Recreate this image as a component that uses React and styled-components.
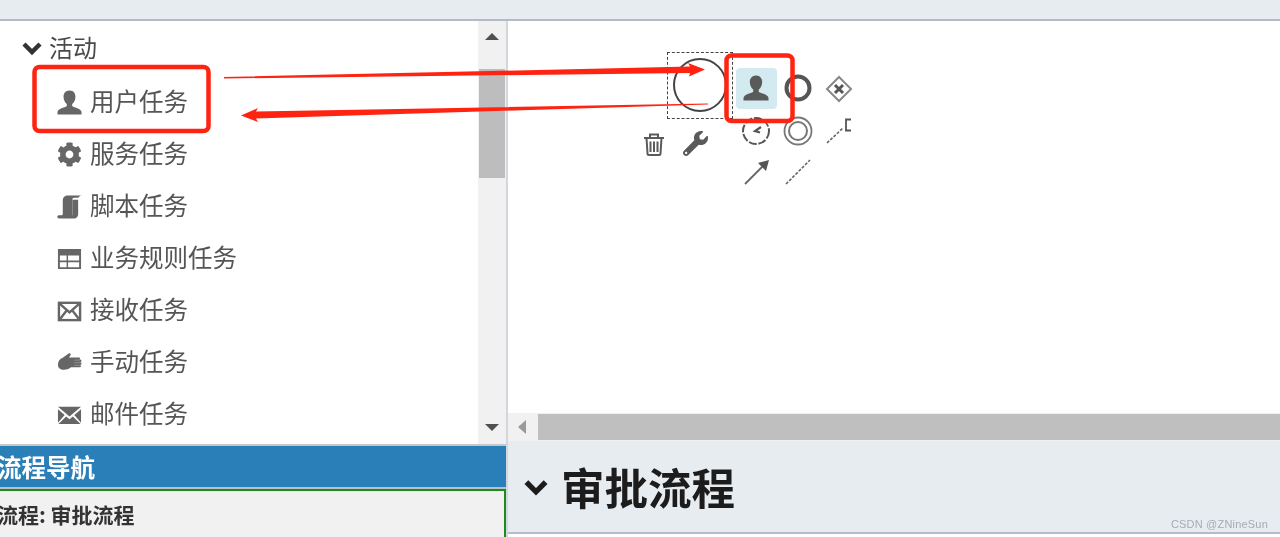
import React from 'react';
import styled, { createGlobalStyle } from 'styled-components';
import { FaCog, FaWrench } from 'react-icons/fa';

const GlobalStyle = createGlobalStyle`
    html, body {
        margin: 0;
        padding: 0;
        overflow: hidden;
    }
    body {
        font-family: "Noto Sans CJK SC", "Liberation Sans", sans-serif;
    }
`;

const Page = styled.div`
    position: relative;
    width: 1280px;
    height: 537px;
    overflow: hidden;
    background: #fff;
    display: flex;
    flex-direction: column;
    filter: blur(0.35px);
`;

const TopBar = styled.div`
    height: 19px;
    flex: none;
    background: #e7ecf1;
    border-bottom: 2px solid #b4bac8;
`;

const Main = styled.div`
    flex: 1;
    min-height: 0;
    display: flex;
`;

const LeftColumn = styled.div`
    width: 506px;
    flex: none;
    display: flex;
    flex-direction: column;
    border-right: 2px solid #d3d6dc;
`;

const Palette = styled.div`
    height: 423px;
    flex: none;
    display: flex;
    border-bottom: 2px solid #c6c8ca;
`;

const PaletteList = styled.div`
    flex: 1;
`;

const GroupTitle = styled.div`
    box-sizing: border-box;
    height: 53px;
    padding: 0 0 2px 22px;
    display: flex;
    align-items: center;
    gap: 7px;
    font-size: 24px;
    color: #4a4a4a;
    svg {
        width: 20px;
        height: 20px;
        color: #333;
        transform: translateY(1px);
    }
`;

const PaletteRow = styled.div`
    height: 52px;
    padding-left: 57px;
    display: flex;
    align-items: center;
    gap: 8px;
    font-size: 24.5px;
    color: #555;
`;

const RowIcon = styled.span`
    width: 25px;
    height: 25px;
    flex: none;
    color: #666;
    display: flex;
    align-items: center;
    justify-content: center;
    transform: translateY(2px);
    svg {
        width: 100%;
        height: 100%;
        display: block;
    }
`;

const VScroll = styled.div`
    width: 28px;
    flex: none;
    background: #f1f1f1;
    display: flex;
    flex-direction: column;
    align-items: center;
`;

const VThumb = styled.div`
    width: 26px;
    height: 109px;
    margin-top: 29px;
    background: #bdbdbd;
`;

const UpArrow = styled.div`
    width: 0;
    height: 0;
    margin-top: 12px;
    border-left: 7px solid transparent;
    border-right: 7px solid transparent;
    border-bottom: 7px solid #505050;
`;

const DownArrow = styled.div`
    width: 0;
    height: 0;
    margin-top: auto;
    margin-bottom: 13px;
    border-left: 7px solid transparent;
    border-right: 7px solid transparent;
    border-top: 7px solid #505050;
`;

const NavHeader = styled.div`
    height: 41px;
    flex: none;
    background: #2a7fb8;
    border-bottom: 2px solid #bcc0c4;
    display: flex;
    align-items: center;
    font-size: 24.5px;
    font-weight: 700;
    color: #fff;
    white-space: nowrap;
    span {
        margin-left: -3px;
    }
`;

const NavBody = styled.div`
    flex: 1;
    background: #f1f1f1;
    border-top: 2px solid #1c8a1c;
    border-right: 2px solid #1c8a1c;
    padding-top: 9px;
    font-size: 21px;
    line-height: 28px;
    font-weight: 700;
    color: #333;
    white-space: nowrap;
    span {
        margin-left: -3px;
    }
`;

const RightColumn = styled.div`
    flex: 1;
    display: flex;
    flex-direction: column;
`;

const Canvas = styled.div`
    position: relative;
    height: 392px;
    flex: none;
    background: #fff;
`;

const HScroll = styled.div`
    height: 28px;
    flex: none;
    background: #f1f1f1;
    display: flex;
    align-items: center;
`;

const LeftArrow = styled.div`
    width: 0;
    height: 0;
    margin-left: 10px;
    border-top: 7px solid transparent;
    border-bottom: 7px solid transparent;
    border-right: 8px solid #9a9a9a;
`;

const HThumb = styled.div`
    flex: 1;
    height: 26px;
    margin-left: 12px;
    background: #bfbfbf;
`;

const ProcessHeader = styled.div`
    box-sizing: border-box;
    height: 93px;
    flex: none;
    background: #e7ecf1;
    border-bottom: 2px solid #b4bccb;
    padding-left: 16px;
    display: flex;
    align-items: center;
    gap: 13px;
    font-size: 43.5px;
    font-weight: 700;
    color: #1c1c1c;
    svg {
        width: 24px;
        height: 24px;
        color: #1c1c1c;
    }
`;

const Watermark = styled.div`
    position: absolute;
    right: 12px;
    top: 517px;
    font-family: "Liberation Sans", Arial, sans-serif;
    font-size: 11px;
    line-height: 14px;
    letter-spacing: 0.2px;
    color: #a6abb1;
`;

// canvas items, coords are relative to the canvas
const Selection = styled.div`
    position: absolute;
    left: 159px;
    top: 31px;
    width: 64px;
    height: 65px;
    border: 1.5px dashed #444;
`;

const StartEvent = styled.div`
    position: absolute;
    left: 165px;
    top: 37px;
    width: 50px;
    height: 50px;
    border: 2px solid #444;
    border-radius: 50%;
`;

const PadItem = styled.div`
    position: absolute;
    left: ${p => p.$x - 508}px;
    top: ${p => p.$y - 21}px;
    width: ${p => p.$w || 26}px;
    height: ${p => p.$h || 26}px;
    color: #5a5a5a;
    svg {
        width: 100%;
        height: 100%;
        display: block;
    }
`;

const Highlight = styled.div`
    position: absolute;
    left: 228px;
    top: 47px;
    width: 41px;
    height: 41px;
    border-radius: 4px;
    background: #d2eaf0;
`;

const Annotations = styled.svg`
    position: absolute;
    left: 0;
    top: 0;
    width: 1280px;
    height: 537px;
    pointer-events: none;
`;

const ChevronIcon = () => (
    <svg viewBox="0 0 20 20">
        <path fill="none" stroke="currentColor" strokeWidth="4.500" d="M2 6l8 8 8-8" />
    </svg>
);

const UserIcon = () => (
    <svg viewBox="0 0 26 26">
        <path fill="currentColor" d="M13 0.500c-4 0-6.200 3-6.200 6.400 0 3 1.400 6 3.400 7.600v2.200c-1 1.600-8.600 2-9.700 6v2.800h25v-2.800c-1.100-4-8.700-4.400-9.700-6v-2.200c2-1.600 3.400-4.600 3.400-7.600 0-3.400-2.200-6.400-5.800-6.400z" />
    </svg>
);

const ScriptIcon = () => (
    <svg viewBox="0 0 26 26">
        <path fill="currentColor" d="M7 3.500c1-1.500 2.500-2 4-2h14c-1.500.8-2.500 1.500-3 2.500h-4.500c-1 0-1.500 1-1.500 2v17c0 1.500-1.500 2.500-3 2.500H2.500c-1.500 0-2.200-.8-2.200-1.800s.8-1.700 2-1.700h2.500c.8 0 1.200-.8 1.200-1.500V6.500c0-1 .4-2.200 1-3z" />
        <path fill="currentColor" d="M16 6h6v15c0 2.500-2 4.500-4 4.500h-5c2-1 3-2.500 3-4.500z" />
    </svg>
);

const TableIcon = () => (
    <svg viewBox="0 0 26 26">
        <path fill="currentColor" fillRule="evenodd" d="M1 3h24v21H1zM3 10v5h7v-5zM11.500 10v5H23v-5zM3 17v5h7v-5zM11.500 17v5H23v-5z" />
    </svg>
);

const MailOutlineIcon = () => (
    <svg viewBox="0 0 26 26">
        <rect x="2" y="5" width="22" height="18" fill="none" stroke="currentColor" strokeWidth="2.500" />
        <path fill="none" stroke="currentColor" strokeWidth="2.500" d="M3 6l10 9 10-9M3 22l7-9M23 22l-7-9" />
    </svg>
);

const HandIcon = () => (
    <svg viewBox="0 0 26 26">
        <path fill="currentColor" d="M1 15.500c0-4 2-6.500 5-7.500l6.500-4.500c1.200-.7 2.500.6 1.500 2l-1.500 2.200H23c1.300 0 1.300 2.300 0 2.300h1.300c1.500 0 1.500 2.700 0 2.700h.2c1.400 0 1.400 2.700 0 2.700H24c1.300 0 1.300 2.600 0 2.600h-9.500c-1.500 1.800-4 2.500-7.500 2.500-3.500 0-6-2-6-5z" />
        <path stroke="#fff" strokeOpacity=".45" strokeWidth=".6" d="M18 10.500h6M18 13.200h7M18 15.900h7" />
    </svg>
);

const MailFilledIcon = () => (
    <svg viewBox="0 0 26 26">
        <path fill="currentColor" d="M1 5h24L13 15zM1 7.500l7 6-7 8zM25 7.500l-7 6 7 8zM9.500 15l3.500 3 3.500-3 8 8H1.500z" />
    </svg>
);

const TrashIcon = () => (
    <svg viewBox="0 0 22 24">
        <path fill="none" stroke="currentColor" strokeWidth="2" d="M1 6h20M7 6V2.500h8V6M3.500 6l1 15.500c0 .8.500 1.500 1.500 1.500h10c1 0 1.500-.7 1.500-1.500l1-15.500M7.500 9.500V20M11 9.500V20M14.500 9.500V20" />
    </svg>
);

const DiamondIcon = () => (
    <svg viewBox="0 0 28 28">
        <path fill="none" stroke="#888" strokeWidth="2" d="M14 2l12 12-12 12L2 14z" />
        <path stroke="#555" strokeWidth="3" d="M10 10l8 8M18 10l-8 8" />
    </svg>
);

const BoldCircleIcon = () => (
    <svg viewBox="0 0 30 30">
        <circle cx="15" cy="15" r="11.500" fill="none" stroke="#555" strokeWidth="4" />
    </svg>
);

const TimerIcon = () => (
    <svg viewBox="0 0 30 30">
        <circle cx="15" cy="15" r="13" fill="none" stroke="#555" strokeWidth="2" strokeDasharray="8 1.800" />
        <path fill="none" stroke="#555" strokeWidth="2.200" d="M20 11l-6 4 5 1.500" />
    </svg>
);

const DoubleCircleIcon = () => (
    <svg viewBox="0 0 30 30">
        <circle cx="15" cy="15" r="13.500" fill="none" stroke="#777" strokeWidth="1.800" />
        <circle cx="15" cy="15" r="9" fill="none" stroke="#777" strokeWidth="2" />
    </svg>
);

const AnnotationIcon = () => (
    <svg viewBox="0 0 26 26">
        <path fill="none" stroke="#666" strokeWidth="1.600" strokeDasharray="3 1.500" d="M1 25l16-15" />
        <path fill="none" stroke="#555" strokeWidth="1.800" d="M25 1.500h-5v11h5" />
    </svg>
);

const ArrowIcon = () => (
    <svg viewBox="0 0 26 26">
        <path fill="none" stroke="#666" strokeWidth="1.800" d="M1 25l18-18" />
        <path fill="#555" d="M25 1l-3 11-8-8z" />
    </svg>
);

const DashedLineIcon = () => (
    <svg viewBox="0 0 26 26">
        <path fill="none" stroke="#666" strokeWidth="1.600" strokeDasharray="3 1.500" d="M1 25L25 1" />
    </svg>
);

const tasks = [
    { name: '用户任务', icon: <UserIcon /> },
    { name: '服务任务', icon: <FaCog /> },
    { name: '脚本任务', icon: <ScriptIcon /> },
    { name: '业务规则任务', icon: <TableIcon /> },
    { name: '接收任务', icon: <MailOutlineIcon /> },
    { name: '手动任务', icon: <HandIcon /> },
    { name: '邮件任务', icon: <MailFilledIcon /> },
];

export default function App() {
    return (
        <Page>
            <GlobalStyle />
            <TopBar />
            <Main>
                <LeftColumn>
                    <Palette>
                        <PaletteList>
                            <GroupTitle>
                                <ChevronIcon />
                                活动
                            </GroupTitle>
                            {tasks.map(task => (
                                <PaletteRow key={task.name}>
                                    <RowIcon>{task.icon}</RowIcon>
                                    {task.name}
                                </PaletteRow>
                            ))}
                        </PaletteList>
                        <VScroll>
                            <UpArrow />
                            <VThumb />
                            <DownArrow />
                        </VScroll>
                    </Palette>
                    <NavHeader><span>流程导航</span></NavHeader>
                    <NavBody><span>流程: 审批流程</span></NavBody>
                </LeftColumn>
                <RightColumn>
                    <Canvas>
                        <Selection />
                        <StartEvent />
                        <Highlight />
                        <PadItem $x={743} $y={75}><UserIcon /></PadItem>
                        <PadItem $x={783} $y={73} $w={30} $h={30}><BoldCircleIcon /></PadItem>
                        <PadItem $x={825} $y={75} $w={28} $h={28}><DiamondIcon /></PadItem>
                        <PadItem $x={643} $y={132} $w={22} $h={24}><TrashIcon /></PadItem>
                        <PadItem $x={683} $y={131} $w={25} $h={25}><FaWrench /></PadItem>
                        <PadItem $x={741} $y={116} $w={30} $h={30}><TimerIcon /></PadItem>
                        <PadItem $x={783} $y={116} $w={30} $h={30}><DoubleCircleIcon /></PadItem>
                        <PadItem $x={826} $y={118}><AnnotationIcon /></PadItem>
                        <PadItem $x={744} $y={159}><ArrowIcon /></PadItem>
                        <PadItem $x={785} $y={159}><DashedLineIcon /></PadItem>
                    </Canvas>
                    <HScroll>
                        <LeftArrow />
                        <HThumb />
                    </HScroll>
                    <ProcessHeader>
                        <ChevronIcon />
                        审批流程
                    </ProcessHeader>
                </RightColumn>
            </Main>
            <Watermark>CSDN @ZNineSun</Watermark>
            <Annotations viewBox="0 0 1280 537">
                <rect x="34.500" y="67" width="174" height="64" rx="5" fill="none" stroke="#ff2312" strokeWidth="4.500" />
                <rect x="726.500" y="55.500" width="66" height="65.500" rx="5" fill="none" stroke="#ff2312" strokeWidth="4.500" />
                <path fill="#ff2312" d="M224 77L690 66.500 688 63 705 69.500 689 76.500 690 73 224 78.500z" />
                <path fill="#ff2312" d="M708 103.500L256 111.500 258 108 241 115.500 258 122 256 118.500 708 104.500z" />
            </Annotations>
        </Page>
    );
}
